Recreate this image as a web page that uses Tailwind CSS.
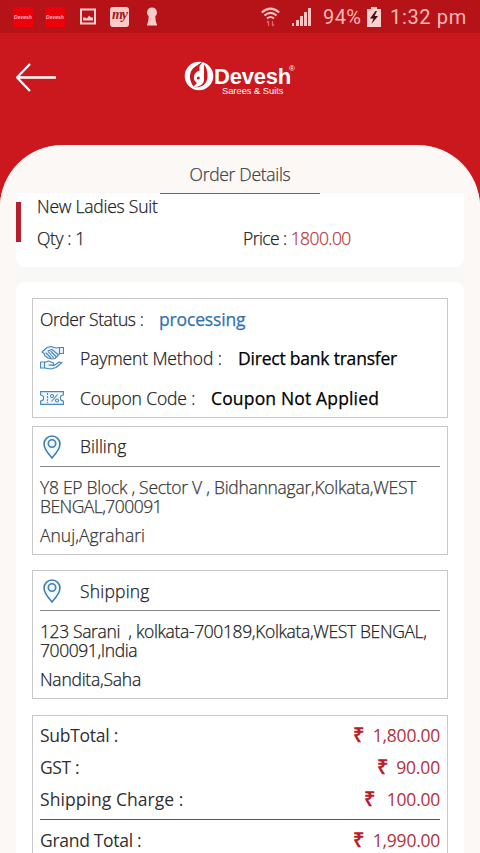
<!DOCTYPE html>
<html lang="en">
<head>
<meta charset="utf-8">
<title>Order Details</title>
<script src="https://cdn.jsdelivr.net/npm/@tailwindcss/browser@4"></script>
</head>
<body class="w-[480px] h-[853px] overflow-hidden bg-[#cb171e] font-['Open_Sans',sans-serif] text-[17.5px] leading-5 font-light text-[#222]">
<div class="flex flex-col h-[853px] overflow-hidden whitespace-nowrap">
  <header class="shrink-0 flex flex-col h-[145px]">
    <div class="h-[33px] shrink-0 bg-[#b51318] flex items-center text-[#ffb9b6]">
      <div class="ml-[13px] w-5 h-5 bg-[#ec0009] flex items-center justify-center font-['Liberation_Sans',sans-serif] italic font-bold text-[5px]"><span>Devesh</span></div>
      <div class="ml-3 w-5 h-5 bg-[#ec0009] flex items-center justify-center font-['Liberation_Sans',sans-serif] italic font-bold text-[5px]"><span>Devesh</span></div>
      <svg class="ml-[15px] w-4 h-[17px]" viewBox="0 0 16 17"><path d="M1 1.500h14v14H1z" fill="none" stroke="#ffd0cd" stroke-width="2"/><path d="M3 12.500v-3h2l2 1 2-3 2 2h2v3z" fill="#ffd0cd"/></svg>
      <div class="ml-[14px] w-[19px] h-5 rounded-[3px] bg-[#ffcbc8] text-[#a01822] flex items-center justify-center font-['Liberation_Serif',serif] italic font-bold text-[14px] leading-4"><span class="-mt-1 -tracking-[1px]">my</span></div>
      <svg class="ml-[17px] w-3 h-[19px]" viewBox="0 0 12 19"><path d="M6 .5a5 5 0 0 0-3.300 8.700L2.300 14 .8 18.500h10.400L9.700 14l-.4-4.800A5 5 0 0 0 6 .5z" fill="#ffcbc8"/></svg>
      <svg class="ml-[103px] w-[19px] h-5" viewBox="0 0 19 20" fill="none" stroke="#ffc2bf" stroke-width="2"><path d="M.8 5.500q8.700-7.800 17.400 0M3.500 8.500q6-5.300 12 0M6 11.500q3.500-3 7 0"/><path d="M7.500 19v-5M6 15.500L7.500 14M11.500 14v5M13 17.500L11.500 19" stroke="#dc6967" stroke-width="1.300"/></svg>
      <svg class="ml-3 w-[19px] h-[19px]" viewBox="0 0 19 19" fill="#ffc2bf"><path d="M0 16h2v3H0zM4 13h3v6H4zM8 9h3v10H8zM12 5h3v14h-3zM16 1h3v18h-3z"/></svg>
      <span class="ml-3 w-10 font-['Roboto',sans-serif] font-normal text-[20px] tracking-[0.4px]">94%</span>
      <svg class="ml-1 w-[14px] h-5" viewBox="0 0 14 20"><path d="M4 0h6v2h4v18H0V2h4z" fill="#ffd0cd"/><path d="M8.500 4L3 11.500h3.500L4.500 17l6.500-8H7.500l2.500-5z" fill="#3d0d10"/></svg>
      <span class="ml-[9px] font-['Roboto',sans-serif] font-normal text-[20px] tracking-[0.65px]">1:32 pm</span>
    </div>
    <div class="flex items-start h-[112px]">
      <svg class="ml-4 mt-[30px] w-10 h-[30px]" viewBox="0 0 40 30" fill="none" stroke="#fff" stroke-width="2.300"><path d="M1 14.500h39M14 1L1 14.500 14 28"/></svg>
      <svg class="ml-[128px] mt-[28px] w-[30px] h-[30px]" viewBox="0 0 30 30"><circle cx="15" cy="15" r="14.300" fill="#fff"/><path d="M19.500 0L10 6.500C5 10.500 4.500 19 9.500 25.500L13 22c-3.500-2.500-4-7-1.500-10 1.500-1.700 4-2.500 4-2.500V5z" fill="#cb171e"/><path d="M20 3.500v15.500c0 4-5 7.500-10.500 7 7 1.500 14-2.500 14-10.500C23.500 10 22.500 6 20 3.500z" fill="#cb171e"/><circle cx="14" cy="17" r="4.200" fill="#fff"/><path d="M16 6l3-2v13h-3z" fill="#fff"/><circle cx="14.300" cy="17" r="1.500" fill="#cb171e"/></svg>
      <div class="flex flex-col mt-[33px] font-['Liberation_Sans',sans-serif] text-white">
        <div class="flex items-start h-[20px]"><span class="text-[22px] leading-[21px] font-bold w-[75px] -tracking-[0.2px]">Devesh</span><span class="text-[8px] leading-[8px] -mt-px">®</span></div>
        <span class="ml-[8px] text-[9.300px] leading-[10px] font-normal">Sarees &amp; Suits</span>
      </div>
    </div>
  </header>
  <main class="flex-1 min-h-0 flex flex-col rounded-t-[62px] overflow-hidden bg-[#fbf8f5] [-webkit-text-stroke:0.25px]">
    <div class="h-[48px] shrink-0 mx-auto w-[160px] relative z-10"><div class="h-[49px] pt-[19px] border-b border-[#6a6a6a] text-center text-[#444] -tracking-[0.3px]">Order Details</div></div>
    <div class="flex-1 min-h-0 flex flex-col px-4 bg-[linear-gradient(90deg,#fbf8f5_16px,#f8f8f7_16px,#f8f8f7_464px,#fbf8f5_464px)]">
      <section class="shrink-0 h-[74px] flex bg-white rounded-b-lg">
        <div class="w-[5px] h-10 mt-[9px] bg-[#b3202b]"></div>
        <div class="ml-4 flex flex-col pt-[3px]">
          <span class="-tracking-[0.23px]">New Ladies Suit</span>
          <div class="mt-3 flex"><span class="w-[206px] -tracking-[0.36px]">Qty : 1</span><span class="-tracking-[0.57px]">Price : <span class="text-[#b53a40]">1800.00</span></span></div>
        </div>
      </section>
      <section class="mt-[15px] h-[571px] shrink-0 bg-white rounded-t-lg px-4 pt-4">
        <div class="h-[120px] border border-[#c8c8c8] px-[7px]">
          <div class="h-[39px] flex items-center"><span class="w-[119px] -tracking-[0.42px]">Order Status :</span><span class="font-normal text-[#3272b0] -tracking-[0.15px]">processing</span></div>
          <div class="h-10 flex items-center">
            <svg class="w-6 h-6 mr-4" viewBox="0 0 24 24" fill="#e8f4fb" stroke="#4a87b5" stroke-width="1.100" stroke-linejoin="round" stroke-linecap="round"><path d="M23.500 1.500v6h-4l-1.500 2-3 3-3 .5-4-1-3-2-1-2.500L2 6l5-4.500 4-1 5 1.500 3-.5z"/><path d="M8 5l4-1.500 6 5M6 7l5 5M8.500 6l5 5.500M11 5.500l5 5M19.500 2v6"/><path d="M.5 16h4v6h-4zM4.500 16.500l4-1.500 5 2v2H9l5 .5 5-3.500 3 .5-6 5-5 1.500-6.500-1"/></svg>
            <span class="w-[158px] -tracking-[0.12px]">Payment Method :</span><span class="font-medium text-black -tracking-[0.21px]">Direct bank transfer</span></div>
          <div class="h-10 flex items-center">
            <svg class="w-6 h-[14px] mr-4" viewBox="0 0 24 14" fill="#edf7fc" stroke="#4a87b5" stroke-width="1.100"><path d="M.6.600h22.800V4a3 3 0 0 0 0 6v3.400H.6V10a3 3 0 0 0 0-6z"/><path d="M7.500 2v10" stroke-dasharray="2 1"/><path d="M17.500 3.500l-6 7"/><circle cx="12" cy="5" r="1.500"/><circle cx="17" cy="9.500" r="1.500"/></svg>
            <span class="w-[131px] -tracking-[0.12px]">Coupon Code :</span><span class="font-medium text-black tracking-[0.16px]">Coupon Not Applied</span></div>
        </div>
        <div class="mt-2 h-[129px] border border-[#c8c8c8] px-[7px]">
          <div class="h-10 flex items-center border-b border-[#858585]">
            <svg class="w-6 h-6 mr-4" viewBox="0 0 24 24" fill="#f1fafd" stroke="#467fae" stroke-width="1.600"><path d="M12 1a8 8 0 0 0-8 8c0 4 3 8.500 8 14 5-5.500 8-10 8-14a8 8 0 0 0-8-8z"/><circle cx="12" cy="8.500" r="3.700"/></svg>
            <span class="-mt-px">Billing</span></div>
          <div class="pt-[10px] flex flex-col text-[#383838]"><span class="-tracking-[0.28px]">Y8 EP Block , Sector V , Bidhannagar,Kolkata,WEST</span><span class="-tracking-[0.54px] -mt-px">BENGAL,700091</span><span class="mt-[9px]">Anuj,Agrahari</span></div>
        </div>
        <div class="mt-[15px] h-[129px] border border-[#c8c8c8] px-[7px]">
          <div class="h-10 flex items-center border-b border-[#858585]">
            <svg class="w-6 h-6 mr-4" viewBox="0 0 24 24" fill="#f1fafd" stroke="#467fae" stroke-width="1.600"><path d="M12 1a8 8 0 0 0-8 8c0 4 3 8.500 8 14 5-5.500 8-10 8-14a8 8 0 0 0-8-8z"/><circle cx="12" cy="8.500" r="3.700"/></svg>
            <span class="tracking-[0.2px]">Shipping</span></div>
          <div class="pt-[10px] flex flex-col"><span class="-tracking-[0.37px] whitespace-pre">123 Sarani  , kolkata-700189,Kolkata,WEST BENGAL,</span><span class="-tracking-[0.42px] -mt-px">700091,India</span><span class="mt-[9px] -tracking-[0.25px]">Nandita,Saha</span></div>
        </div>
        <div class="mt-4 h-[138px] border border-b-0 border-[#c8c8c8] px-[7px] pt-[3px] font-normal text-[#303030] [-webkit-text-stroke:0px]">
          <div class="border-b border-[#555] h-[101px]">
            <div class="h-8 flex items-center justify-between"><span class="-tracking-[0.27px]">SubTotal :</span><span class="flex text-[#b1323d] -tracking-[0.25px]"><b class="w-5 text-[20px] text-[#b7202b]">₹</b>1,800.00</span></div>
            <div class="h-8 flex items-center justify-between"><span class="-tracking-[0.36px]">GST :</span><span class="flex text-[#b1323d] -tracking-[0.15px]"><b class="w-[19px] text-[20px] text-[#b7202b]">₹</b>90.00</span></div>
            <div class="h-8 flex items-center justify-between"><span class="tracking-[0.06px]">Shipping Charge :</span><span class="flex text-[#b1323d] -tracking-[0.25px]"><b class="w-[23px] text-[20px] text-[#b7202b]">₹</b>100.00</span></div>
          </div>
          <div class="h-[33px] pt-[10px] flex items-start justify-between"><span class="-tracking-[0.3px]">Grand Total :</span><span class="flex text-[#b1323d] -tracking-[0.25px]"><b class="w-5 text-[20px] text-[#b7202b]">₹</b>1,990.00</span></div>
        </div>
      </section>
    </div>
  </main>
</div>
</body>
</html>
